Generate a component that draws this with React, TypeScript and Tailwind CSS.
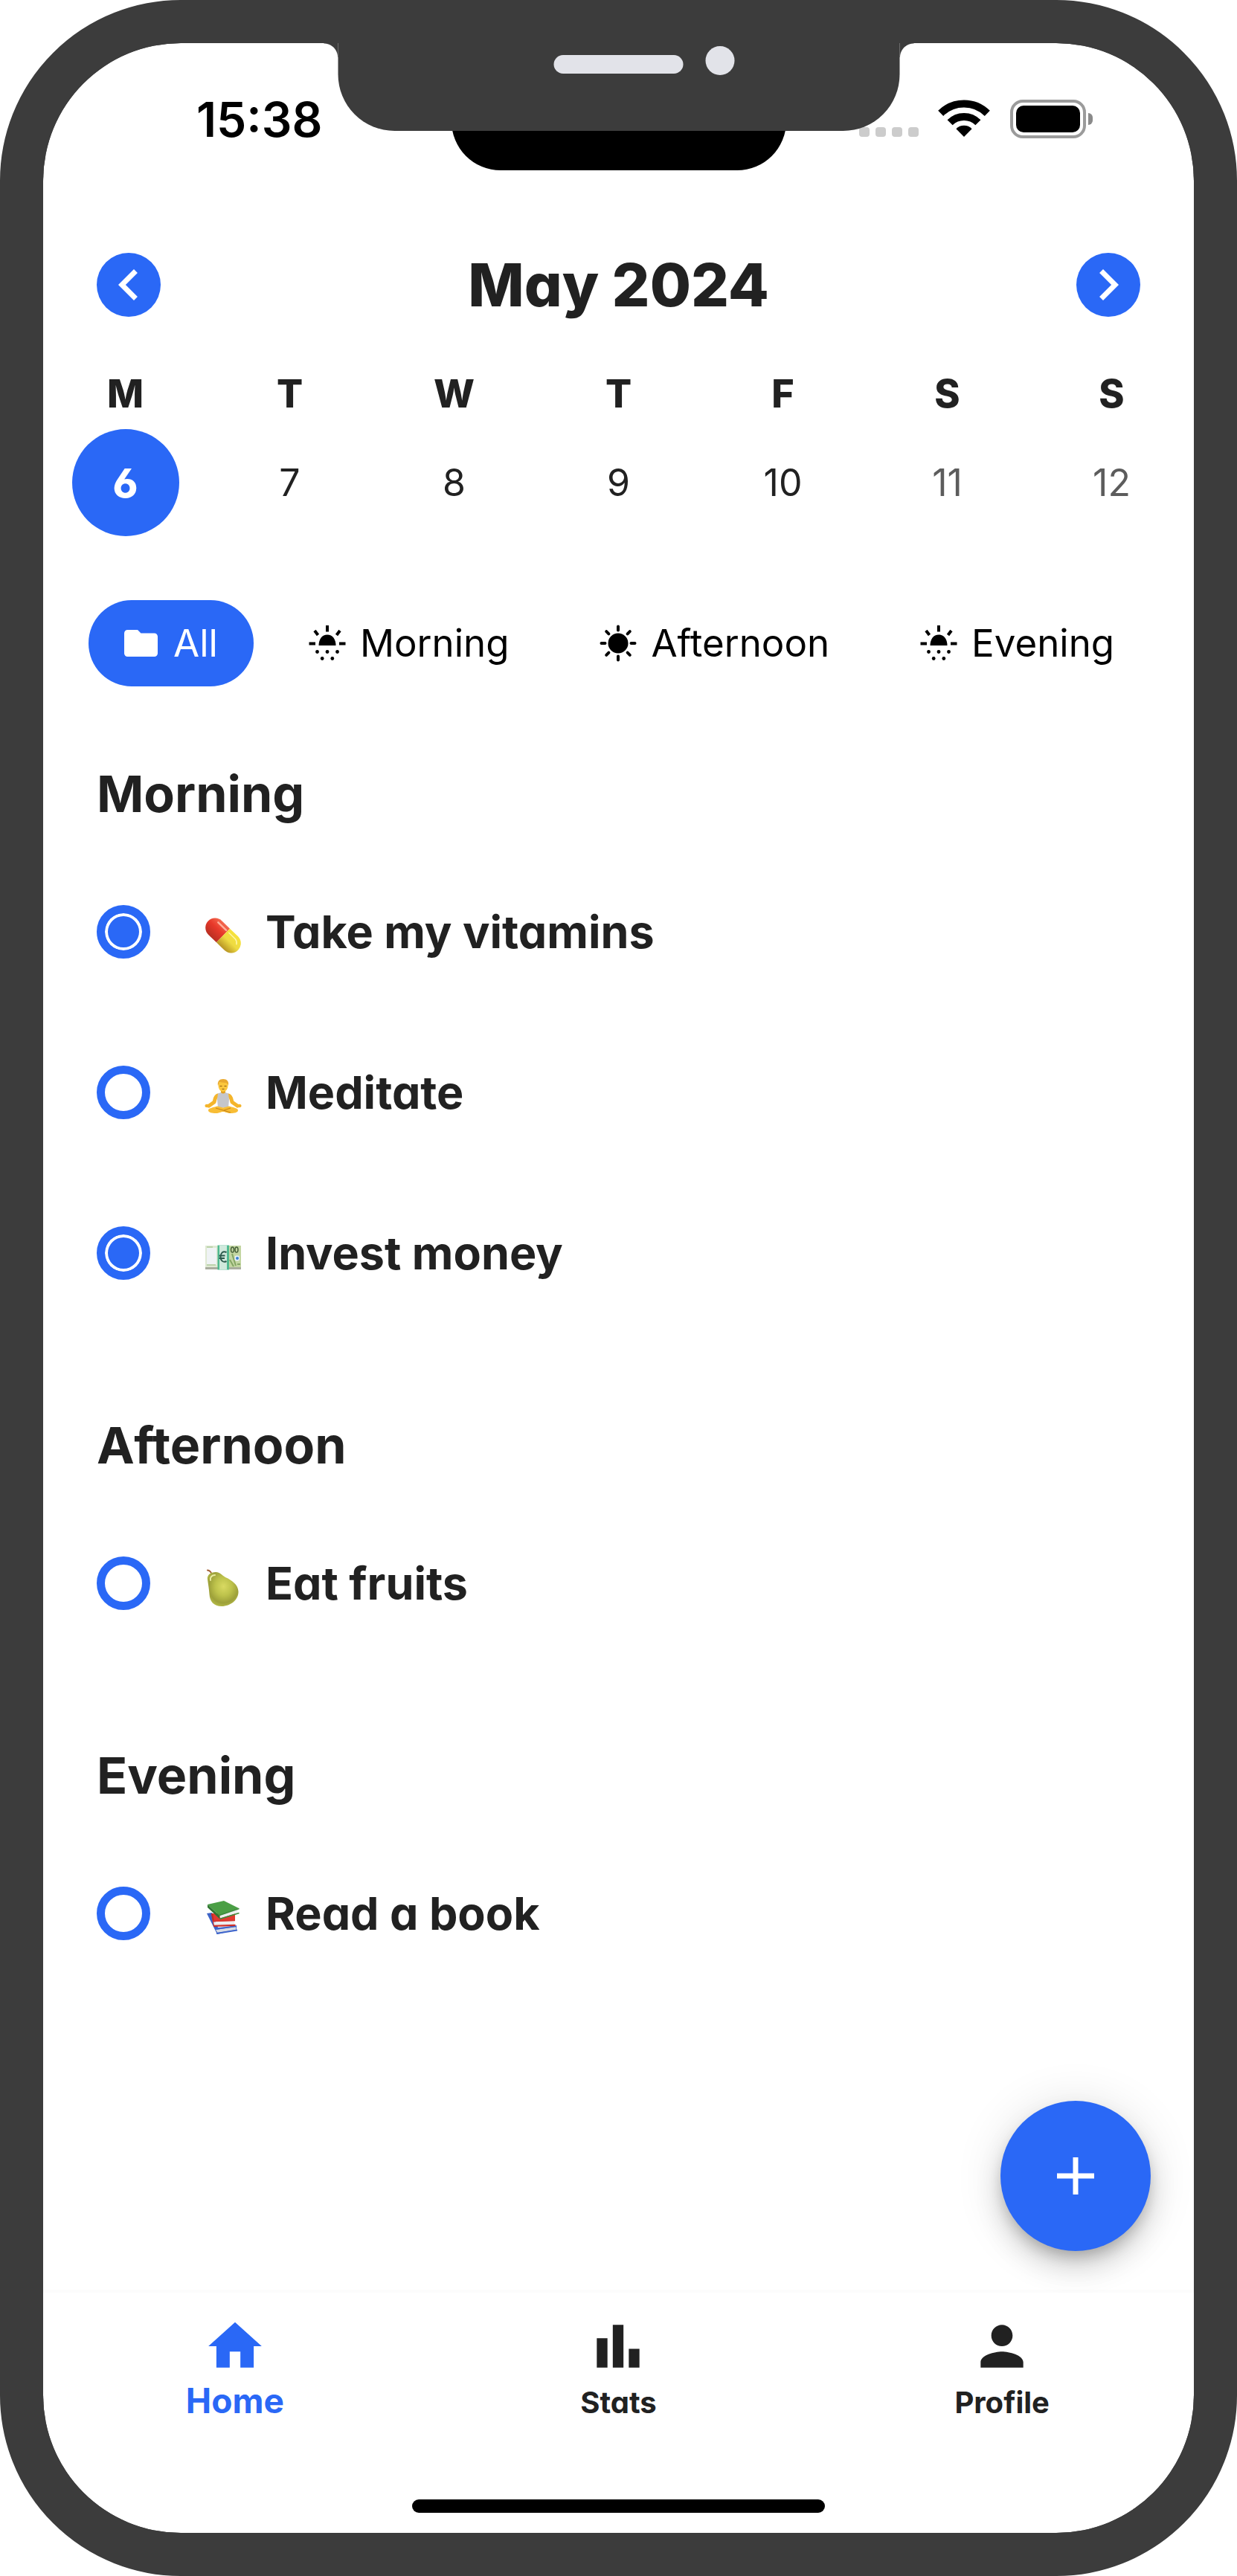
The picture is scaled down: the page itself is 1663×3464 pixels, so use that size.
import { useState } from "react";
import type { ReactNode } from "react";

function ChevronIcon({ flip = false }: { flip?: boolean }) {
  return (
    <svg viewBox="0 0 24 24" className="size-[84px]" fill="currentColor" aria-hidden="true">
      {flip ? (
        <path d="M10 6 8.59 7.41 13.17 12l-4.58 4.59L10 18l6-6z" />
      ) : (
        <path d="M15.41 7.41 14 6l-6 6 6 6 1.41-1.41L10.83 12z" />
      )}
    </svg>
  );
}

function FolderIcon() {
  return (
    <svg viewBox="2 0 20 24" className="h-[54px] w-[45px]" fill="currentColor" aria-hidden="true">
      <path d="M10 4H4c-1.1 0-1.99.9-1.99 2L2 18c0 1.100.9 2 2 2h16c1.100 0 2-.9 2-2V8c0-1.100-.9-2-2-2h-8z" />
    </svg>
  );
}

function HorizonSunIcon() {
  return (
    <svg viewBox="0 0 50 50" className="size-[50px]" fill="currentColor" aria-hidden="true">
      <path d="M13.500 28c0-8.500 4.500-14.500 11.500-14.500S36.500 19.500 36.500 28z" />
      <path d="M25 1v8.500M.5 25.500H9M41 25.500h8.500M8 8l4.500 6M42 8l-4.500 6" stroke="currentColor" strokeWidth="4" />
      <circle cx="11.500" cy="36.500" r="2.400" />
      <circle cx="25" cy="36.500" r="2.400" />
      <circle cx="38.500" cy="36.500" r="2.400" />
      <circle cx="18.200" cy="45.500" r="2.400" />
      <circle cx="31.800" cy="45.500" r="2.400" />
    </svg>
  );
}

function SunIcon() {
  return (
    <svg viewBox="0 0 50 50" className="size-[50px]" fill="currentColor" aria-hidden="true">
      <circle cx="25" cy="25" r="13.500" />
      <path
        d="M25 2.500v5M25 42.500v5M2.500 25h5M42.500 25h5M9.200 9.200l3.200 3.200M37.600 37.600l3.200 3.200M9.200 40.800l3.200-3.200M37.600 12.400l3.200-3.200"
        stroke="currentColor"
        strokeWidth="4"
        strokeLinecap="round"
      />
    </svg>
  );
}

function WifiIcon() {
  return (
    <svg viewBox="0 0 70 50" className="h-[50px] w-[70px]" fill="none" stroke="black" strokeWidth="10" aria-hidden="true">
      <path d="M3.700 18.400a44.300 44.300 0 0 1 62.600 0" />
      <path d="M16.100 30.800a26.700 26.700 0 0 1 37.800 0" />
      <path d="M24.400 39.200a15 15 0 0 1 21.200 0L35 50z" fill="black" stroke="none" />
    </svg>
  );
}

function PillIcon() {
  return (
    <svg viewBox="0 0 50 72" className="h-[72px] w-[50px] shrink-0" aria-hidden="true">
      <defs>
        <linearGradient id="pillRed" x1="0" y1="0" x2="0" y2="1">
          <stop offset="0" stopColor="#f36a50" />
          <stop offset=".45" stopColor="#e8392a" />
          <stop offset="1" stopColor="#b92f22" />
        </linearGradient>
        <linearGradient id="pillYellow" x1="0" y1="0" x2="0" y2="1">
          <stop offset="0" stopColor="#f7e23c" />
          <stop offset=".5" stopColor="#eedb42" />
          <stop offset="1" stopColor="#b79424" />
        </linearGradient>
      </defs>
      <g transform="translate(25 41) rotate(44)">
        <path d="M0-13h-15a13 13 0 0 0 0 26H0z" fill="url(#pillRed)" />
        <path d="M0-13h15a13 13 0 0 1 0 26H0z" fill="url(#pillYellow)" />
        <path d="M-17-8H-2" stroke="#ffb09c" strokeWidth="2.500" strokeLinecap="round" />
        <path d="M3-8h12a8 8 0 0 1 6 4" fill="none" stroke="#fdf6a8" strokeWidth="1.500" strokeLinecap="round" />
      </g>
    </svg>
  );
}

function MeditateIcon() {
  return (
    <svg viewBox="0 0 50 72" className="h-[72px] w-[50px] shrink-0" aria-hidden="true">
      <path d="M18 40c-4 1-4 6-5 9l-7 5M32 40c4 1 4 6 5 9l7 5" fill="none" stroke="#f4b52c" strokeWidth="5" strokeLinecap="round" strokeLinejoin="round" />
      <path d="M22 31h6v8h-6z" fill="#e3a01f" />
      <path d="M18 37.500q2-1 4-1.500 3 3 6 0 2 .5 4 1.500l1 8-1 11H18l-1-11z" fill="#c5c6cb" />
      <path d="M5 60c0-3 6-3.500 12-5.500l8 2 8-2c6 2 12 2.500 12 5.500s-5 4-10 4-7-2-10-2-5 2-10 2-10-1-10-4z" fill="#f8bd35" />
      <path d="M15 57l20 6M35 57l-9 3" stroke="#c98618" strokeWidth="1.200" />
      <ellipse cx="3.500" cy="54" rx="3" ry="2.200" fill="#f4b52c" />
      <ellipse cx="46.500" cy="54" rx="3" ry="2.200" fill="#f4b52c" />
      <ellipse cx="25" cy="27" rx="6.500" ry="8" fill="#fbc63c" />
      <path d="M18 27c-1-6 2-9 7-9s8 3 7 9c-1-3-2-4-4-4-4 0-6-1-8-1z" fill="#e9a92f" />
      <path d="M20.500 27.500h3M26.500 27.500h3M23.500 31.500h3" stroke="#8d5c14" strokeWidth="1" />
    </svg>
  );
}

function BanknoteIcon() {
  return (
    <svg viewBox="0 0 50 72" className="h-[72px] w-[50px] shrink-0" aria-hidden="true">
      <path d="M1 26h48v31q-24 2-48 0z" fill="#dfe9d3" />
      <path d="M1 55h48v3H1z" fill="#a9ad9f" />
      <path d="M3 29h13v23H3z" fill="#eff3f5" />
      <path d="M3 28h8M3 52h12" stroke="#bdd4ac" strokeWidth="2" />
      <path d="M33 26h16v29H33z" fill="#c3d6a2" />
      <path d="M37 37l5 16M34 45l5 9M44 51h4" stroke="#84a664" strokeWidth="2" />
      <ellipse cx="37.500" cy="31.500" rx="2" ry="3.500" fill="none" stroke="#47613a" strokeWidth="1.500" />
      <ellipse cx="43" cy="31.500" rx="2" ry="3.500" fill="none" stroke="#47613a" strokeWidth="1.500" />
      <rect x="40.500" y="39.500" width="6.500" height="7" rx="2" fill="#e6f0fb" />
      <circle cx="44" cy="43" r="2" fill="#3b82d0" />
      <path d="M17.500 25.500h15.500v33H17.500z" fill="#4fb990" />
      <path d="M20 25.500h10v33H20z" fill="#cfe9dc" />
      <path d="M29.500 35c-5-2.500-8 1.500-8 6s3 8.500 8 6M19.500 39.500h8M19.500 43h7.500" fill="none" stroke="#2c5a4c" strokeWidth="2" />
    </svg>
  );
}

function PearIcon() {
  return (
    <svg viewBox="0 0 50 72" className="h-[72px] w-[50px] shrink-0" aria-hidden="true">
      <defs>
        <radialGradient id="pearSkin" cx=".52" cy=".42" r=".6">
          <stop offset="0" stopColor="#d9da62" />
          <stop offset=".45" stopColor="#bdc24b" />
          <stop offset=".8" stopColor="#9da03a" />
          <stop offset="1" stopColor="#b4ba48" />
        </radialGradient>
      </defs>
      <path d="M4 18.500q4 .5 5.500 5" fill="none" stroke="#a5623a" strokeWidth="2" strokeLinecap="round" />
      <path
        d="M4 31C3 25 8 21 15 21c6 0 8 4 13 7 9 4 17 10 17.500 19C46 58 35 67 23 67 12 67 7 60 6.500 51 6 43 5 38 4 31z"
        fill="url(#pearSkin)"
      />
      <path d="M8 32c-1-4 2-7 6-7" fill="none" stroke="#e9eca0" strokeWidth="2" strokeLinecap="round" />
    </svg>
  );
}

function BooksIcon() {
  return (
    <svg viewBox="0 0 50 72" className="h-[72px] w-[50px] shrink-0" aria-hidden="true">
      <path d="M3 36l7-1 8 20 25-1v4l-26 6z" fill="#3c63c6" />
      <path d="M15 58l27-4 .5 4-25 4z" fill="#d9dde6" />
      <path d="M14 57l29-4M16 63l28-4.500" stroke="#3f66cc" strokeWidth="1.800" />
      <path d="M9 36h32v10l-30 1z" fill="#e23a30" />
      <path d="M10 36l3 17 28-1" fill="none" stroke="#c22c25" strokeWidth="2" />
      <path d="M12 47.500l28-1v5l-27 .5z" fill="#eceef0" />
      <path d="M11 46.500l30-1M12.500 52.500l29-1" stroke="#d5352c" strokeWidth="1.600" />
      <path d="M4 24l22-5 20 10-26 10z" fill="#4b9f45" />
      <path d="M4 24l16 15 .5 4.500L4 28z" fill="#2f7531" />
      <path d="M20.500 38.500L45 30.500l-1 5-23 7z" fill="#edeff0" />
      <path d="M20 38.500l26.500-9M20.500 43.500l26-8" stroke="#3c8b3a" strokeWidth="1.600" />
    </svg>
  );
}

type Habit = { id: string; name: string; icon: ReactNode; done: boolean };
type Section = { title: string; habits: Habit[] };

const sections: Section[] = [
  {
    title: "Morning",
    habits: [
      { id: "vitamins", name: "Take my vitamins", icon: <PillIcon />, done: true },
      { id: "meditate", name: "Meditate", icon: <MeditateIcon />, done: false },
      { id: "invest", name: "Invest money", icon: <BanknoteIcon />, done: true },
    ],
  },
  { title: "Afternoon", habits: [{ id: "fruits", name: "Eat fruits", icon: <PearIcon />, done: false }] },
  { title: "Evening", habits: [{ id: "book", name: "Read a book", icon: <BooksIcon />, done: false }] },
];

const days = [
  { letter: "M", date: 6 },
  { letter: "T", date: 7 },
  { letter: "W", date: 8 },
  { letter: "T", date: 9 },
  { letter: "F", date: 10 },
  { letter: "S", date: 11 },
  { letter: "S", date: 12 },
];

const filters = [
  { label: "All", icon: <FolderIcon /> },
  { label: "Morning", icon: <HorizonSunIcon /> },
  { label: "Afternoon", icon: <SunIcon /> },
  { label: "Evening", icon: <HorizonSunIcon /> },
];

const tabs = [
  { label: "Home", path: "M10 20v-6h4v6h5v-8h3L12 3 2 12h3v8z" },
  { label: "Stats", path: "M4 9h4v11H4zm12 4h4v7h-4zm-6-9h4v16h-4z" },
  {
    label: "Profile",
    path: "M12 12c2.210 0 4-1.790 4-4s-1.790-4-4-4-4 1.790-4 4 1.790 4 4 4m0 2c-2.670 0-8 1.340-8 4v2h16v-2c0-2.660-5.330-4-8-4",
  },
];

function Notch() {
  return (
    <div className="pointer-events-none absolute inset-x-0 top-0">
      <div className="absolute left-1/2 top-0 h-[171px] w-[450px] -translate-x-1/2 rounded-b-[66px] bg-black" />
      <div className="absolute left-1/2 top-0 h-[118px] w-[755px] -translate-x-1/2 rounded-b-[76px] bg-[#3c3c3c]">
        <div className="absolute -left-[19px] top-0 size-[19px] bg-[radial-gradient(circle_at_0_100%,transparent_18px,#3c3c3c_19px)]" />
        <div className="absolute -right-[19px] top-0 size-[19px] bg-[radial-gradient(circle_at_100%_100%,transparent_18px,#3c3c3c_19px)]" />
        <div className="flex items-start justify-center gap-[30px] pl-[69px]">
          <div className="mt-4 h-[25px] w-[174px] rounded-full bg-[#e2e3e9]" />
          <div className="mt-1 size-[39px] rounded-full bg-[#e2e3e9]" />
        </div>
      </div>
    </div>
  );
}

function StatusBar() {
  return (
    <div className="flex h-[128px] items-end justify-between pl-[206px] pr-[136px]">
      <time className="text-[64px] font-semibold leading-[50px] text-black">15:38</time>
      <div className="flex items-end">
        <div className="flex gap-2 pb-0.5" aria-hidden="true">
          <span className="h-[13px] w-3.5 rounded bg-[#ccc]" />
          <span className="h-[13px] w-3.5 rounded bg-[#ccc]" />
          <span className="h-[13px] w-3.5 rounded bg-[#ccc]" />
          <span className="h-[13px] w-3.5 rounded bg-[#ccc]" />
        </div>
        <div className="ml-[26px] pb-0.5">
          <WifiIcon />
        </div>
        <div className="ml-[27px] flex items-center gap-[3px]">
          <div className="h-[52px] w-[102px] rounded-[17px] border-4 border-[#9b9b9b] p-1">
            <div className="h-full rounded-[10px] bg-black" />
          </div>
          <div className="h-4 w-1.5 rounded-r-full bg-[#8a8a8a]" />
        </div>
      </div>
    </div>
  );
}

export default function App() {
  const [selectedDay, setSelectedDay] = useState(6);
  const [filter, setFilter] = useState("All");

  return (
    <div className="min-h-screen bg-white">
      <div className="relative flex min-h-screen flex-col overflow-hidden rounded-[243px] border-[58px] border-[#3c3c3c] bg-[#3c3c3c] font-['Inter',sans-serif] text-[#212121]">
        <div className="flex flex-1 flex-col rounded-[185px] bg-white">
          <StatusBar />
          <Notch />

          <header className="mt-[154px] flex h-[86px] items-center justify-between px-[72px]">
            <button type="button" aria-label="Previous week" className="flex size-[86px] items-center justify-center rounded-full bg-[#2a68f6] text-white">
              <ChevronIcon />
            </button>
            <h1 className="text-[80px] font-extrabold leading-[86px] [font-feature-settings:'cv11']">May 2024</h1>
            <button type="button" aria-label="Next week" className="flex size-[86px] items-center justify-center rounded-full bg-[#2a68f6] text-white">
              <ChevronIcon flip />
            </button>
          </header>

          <div className="mt-[74px] grid grid-cols-7">
            {days.map((day) => (
              <div key={day.date} className="flex flex-col items-center gap-[17px]">
                <span className="text-[52px] font-extrabold leading-[60px]">{day.letter}</span>
                <button
                  type="button"
                  onClick={() => setSelectedDay(day.date)}
                  className={
                    day.date === selectedDay
                      ? "flex size-[144px] items-center justify-center rounded-full bg-[#2a68f6] text-[54px] font-extrabold text-white [font-feature-settings:'cv03']"
                      : day.date > 10
                        ? "flex size-[144px] items-center justify-center text-[50px] text-[#5c5c5c]"
                        : "flex size-[144px] items-center justify-center text-[50px] text-[#212121]"
                  }
                >
                  {day.date}
                </button>
              </div>
            ))}
          </div>

          <div className="mt-[86px] flex gap-[26px] pl-[61px]">
            {filters.map((item) => (
              <button
                key={item.label}
                type="button"
                onClick={() => setFilter(item.label)}
                className={
                  item.label === filter
                    ? "flex h-[116px] items-center gap-[21px] rounded-full bg-[#2a68f6] px-12 text-[51px] text-white"
                    : "flex h-[116px] items-center gap-[19px] rounded-full px-12 text-[51px] text-black"
                }
              >
                {item.icon}
                {item.label}
              </button>
            ))}
          </div>

          <main className="relative flex flex-1 flex-col gap-[182px] px-[72px] pt-[104px] [font-feature-settings:'cv11']">
            {sections.map((section) => (
              <section key={section.title}>
                <h2 className="text-[68px] font-bold leading-[80px]">{section.title}</h2>
                <ul className="mt-[110px] flex flex-col gap-36">
                  {section.habits.map((habit) => (
                    <li key={habit.id}>
                      <label htmlFor={habit.id} className="flex h-[72px] items-center">
                        <input
                          id={habit.id}
                          type="checkbox"
                          defaultChecked={habit.done}
                          className="size-[72px] shrink-0 appearance-none rounded-full border-[11px] border-[#2a68f6] checked:bg-[#2a68f6] checked:shadow-[inset_0_0_0_4px_#fff]"
                        />
                        <span className="ml-[73px]">{habit.icon}</span>
                        <span className="ml-8 text-[61px] font-bold leading-[72px]">{habit.name}</span>
                      </label>
                    </li>
                  ))}
                </ul>
              </section>
            ))}
            <button
              type="button"
              aria-label="Add habit"
              className="absolute bottom-[52px] right-[58px] flex size-[202px] items-center justify-center rounded-full bg-[#2a68f6] text-white shadow-[0_11px_18px_-4px_rgba(0,0,0,0.2),0_22px_36px_0_rgba(0,0,0,0.14),0_4px_65px_0_rgba(0,0,0,0.12)]"
            >
              <svg viewBox="0 0 50 50" className="size-[50px]" fill="none" stroke="currentColor" strokeWidth="7" aria-hidden="true">
                <path d="M25 0v50M0 25h50" />
              </svg>
            </button>
          </main>

          <nav className="grid grid-cols-3 items-start border-t-4 border-[#fcfcfc] pt-[29px] [font-feature-settings:'cv11']">
            {tabs.map((tab) => (
              <a
                key={tab.label}
                href={`#${tab.label.toLowerCase()}`}
                className={
                  tab.label === "Home"
                    ? "flex flex-col items-center gap-0.5 text-[46px] font-bold leading-[56px] text-[#2a68f6]"
                    : "flex flex-col items-center gap-0.5 text-[40px] font-bold leading-[62px] text-[#212121]"
                }
              >
                <svg viewBox="0 0 24 24" className="size-[86px]" fill="currentColor" aria-hidden="true">
                  <path d={tab.path} />
                </svg>
                {tab.label}
              </a>
            ))}
          </nav>
          <div className="mx-auto mb-[27px] mt-[99px] h-[18px] w-[555px] rounded-full bg-black" />
        </div>
      </div>
    </div>
  );
}
